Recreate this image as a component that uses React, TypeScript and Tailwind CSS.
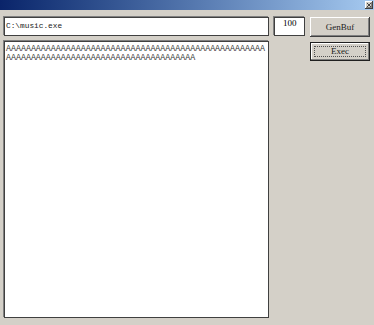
import React from 'react';

const line1 = 'A'.repeat(52);
const line2 = 'A'.repeat(38);

const raised =
  'bg-[#d4d0c8] shadow-[inset_-1px_-1px_0_#404040,inset_1px_1px_0_#ffffff,inset_-2px_-2px_0_#808080,inset_2px_2px_0_#d4d0c8]';

const serif = { fontFamily: '"Liberation Serif", serif' };

export default function App() {
  return (
    <div
      className="w-[374px] h-[325px] bg-[#d4d0c8] flex flex-col overflow-hidden text-black"
      style={{ fontFamily: '"Liberation Mono", monospace' }}
    >
      {/* Title bar */}
      <div className="h-[10px] flex items-center justify-end bg-gradient-to-r from-[#0a246a] to-[#a6caf0] pr-[1px]">
        <div className={`w-[8px] h-[8px] flex items-center justify-center ${raised}`}>
          <svg width="6" height="6" viewBox="0 0 6 6">
            <path d="M1 1L5 5M5 1L1 5" stroke="#444" strokeWidth="1" />
          </svg>
        </div>
      </div>

      <div className="flex flex-row px-[4px] pt-[7px]">
        {/* Left column */}
        <div className="w-[266px] flex flex-col gap-[5px]">
          <div className="h-[19px] bg-white border border-[#404040] shadow-[-1px_-1px_0_#808080] flex items-center pl-[1px] text-[7.8px] leading-none text-[#222]">
            C:\music.exe
          </div>
          <div className="h-[277px] bg-white border border-[#404040] shadow-[-1px_-1px_0_#808080] pl-[1px] pt-[2px] text-[8.3px] leading-[9px] whitespace-pre text-[#333]">
            <div>{line1}</div>
            <div>{line2}</div>
          </div>
        </div>

        {/* Number box */}
        <div
          className="ml-[5px] w-[31px] h-[19px] bg-white border border-[#404040] shadow-[-1px_-1px_0_#808080] flex justify-center pt-[1px] text-[9px] leading-none"
          style={serif}
        >
          100
        </div>

        {/* Buttons */}
        <div className="ml-[5px] w-[60px] flex flex-col gap-[5px] font-normal" style={serif}>
          <button type="button" className={`h-[20px] w-full flex items-center justify-center text-[9px] leading-none font-normal text-[#222] ${raised}`}>
            GenBuf
          </button>
          <button
            type="button"
            className="h-[19px] w-full p-[3px] text-[9px] leading-none font-normal text-[#222] bg-[#d4d0c8] border border-[#202020] shadow-[inset_-1px_-1px_0_#808080,inset_1px_1px_0_#ffffff]"
          >
            <span className="w-full h-full flex items-center justify-center border border-dotted border-[#505050]">
              Exec
            </span>
          </button>
        </div>
      </div>
    </div>
  );
}
